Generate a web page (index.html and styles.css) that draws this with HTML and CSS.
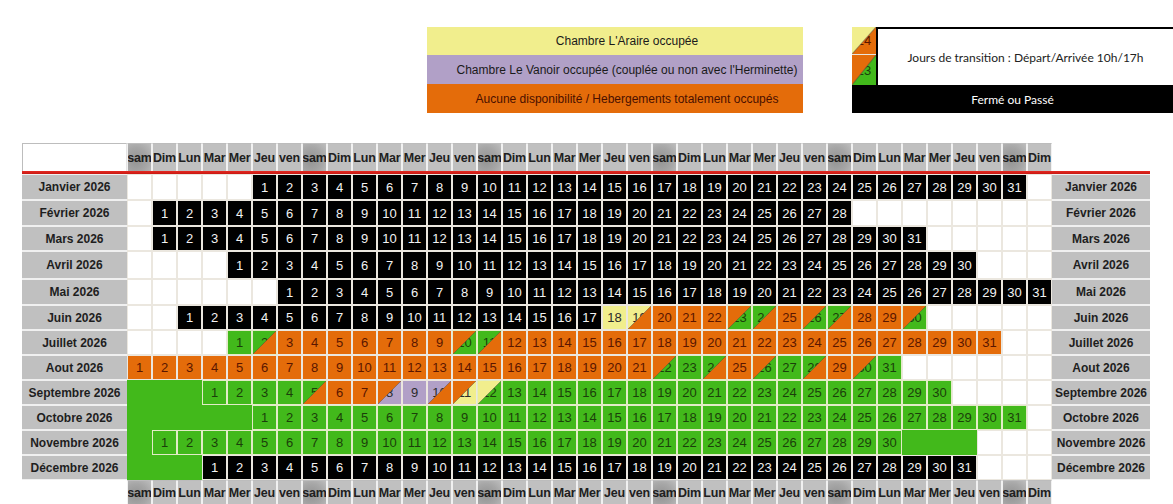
FILE: index.html
```html
<!DOCTYPE html>
<html lang="fr">
<head>
<meta charset="utf-8">
<title>Disponibilités 2026</title>
<link rel="stylesheet" href="styles.css">
</head>
<body>
<header class="legend">
  <div class="legend-main">
    <div class="lg lg-y">Chambre L'Araire occupée</div>
    <div class="lg lg-p">Chambre Le Vanoir occupée (couplée ou non avec l'Herminette)</div>
    <div class="lg lg-o">Aucune disponibilité / Hebergements totalement occupés</div>
  </div>
  <div class="legend-side">
    <div class="side-top">
      <div class="swatches">
        <div class="sw sw-top c-o"><span>24</span><svg class="tri" viewBox="0 0 24 24" preserveAspectRatio="none"><polygon points="0,0 24,0 0,24" fill="#f1ee8d"/><line x1="0" y1="24" x2="24" y2="0" stroke="#4a4a4a" stroke-opacity=".45" stroke-width="1"/></svg></div>
        <div class="sw sw-bot c-g"><span>23</span><svg class="tri" viewBox="0 0 24 24" preserveAspectRatio="none"><polygon points="0,0 24,0 0,24" fill="#e46c0a"/><line x1="0" y1="24" x2="24" y2="0" stroke="#4a4a4a" stroke-opacity=".45" stroke-width="1"/></svg></div>
      </div>
      <div class="trans-box">Jours de transition : Départ/Arrivée 10h/17h</div>
    </div>
    <div class="closed">Fermé ou Passé</div>
  </div>
</header>
<main id="cal" class="cal"></main>
<script src="script.js"></script>
</body>
</html>
```

FILE: styles.css
```css
html, body {
  margin: 0;
  padding: 0;
  overflow: hidden;
  background: #fff;
}
body {
  width: 1173px;
  height: 504px;
  font-family: "Liberation Sans", Arial, sans-serif;
}

/* ---------- legend ---------- */
.legend {
  display: flex;
  padding-top: 27px;
  padding-left: 427px;
  height: 86px;
}
.legend-main {
  width: 376px;
  display: flex;
  flex-direction: column;
}
.lg {
  display: flex;
  align-items: center;
  justify-content: center;
  padding-left: 24px;
  font-size: 12px;
  color: #1a1a1a;
  white-space: nowrap;
}
.lg-y { height: 28px; background: #f1ee8d; }
.lg-p { height: 29px; background: #b1a0c7; }
.lg-o { height: 29px; background: #e46c0a; color: #4a1000; }

.legend-side {
  margin-left: 49px;
  width: 321px;
  display: flex;
  flex-direction: column;
}
.side-top {
  display: flex;
  height: 58px;
}
.swatches {
  width: 24px;
  display: flex;
  flex-direction: column;
}
.sw {
  position: relative;
  display: flex;
  align-items: center;
  justify-content: center;
  font-size: 13px;
  box-sizing: border-box;
}
.sw-top { height: 28px; border-bottom: 1px solid #e9e6de; }
.sw-bot { height: 30px; }
.trans-box {
  flex: 1;
  border-top: 2px solid #000;
  border-left: 2px solid #000;
  display: flex;
  align-items: center;
  justify-content: center;
  font-family: Lato, "Open Sans", sans-serif;
  font-size: 12px;
  color: #222;
}
.closed {
  height: 28px;
  background: #000;
  color: #fff;
  display: flex;
  align-items: center;
  justify-content: center;
  font-family: Lato, "Open Sans", sans-serif;
  font-size: 12px;
}

/* ---------- calendar ---------- */
.cal {
  display: grid;
  margin: 30px 0 0 22px;
  grid-template-columns: 105px repeat(37, 25px) 98px;
  grid-template-rows: 28px 3px 26px 26px 25px 28px 26px repeat(7, 25px) 24px;
}
.corner {
  background: #fff;
  border-top: 1px solid #bdbdbd;
  border-left: 1px solid #bdbdbd;
  border-right: 1px solid #e4e4e4;
}
.blank { background: #fff; }
.hd {
  background: #c0c0c0;
  border-left: 1px solid #f1f1f1;
  border-right: 1px solid #f1f1f1;
  border-top: 1px solid #bcbcbc;
  box-sizing: border-box;
  display: flex;
  align-items: center;
  justify-content: center;
  font-size: 12.5px;
  font-weight: bold;
  color: #202020;
  letter-spacing: -0.2px;
  white-space: nowrap;
  overflow: hidden;
}
.hd-sam {
  background: radial-gradient(ellipse at 35% 60%, #939393 0%, #a6a6a6 55%, #bdbdbd 100%);
}
.redline {
  grid-column: 1 / -1;
  background: linear-gradient(#e42a22, #c81812);
}
.lbl {
  background: #c0c0c0;
  border-top: 1px solid #f0f0f0;
  border-bottom: 1px solid #f0f0f0;
  box-sizing: border-box;
  display: flex;
  align-items: center;
  justify-content: center;
  font-size: 12px;
  font-weight: bold;
  color: #1e1e1e;
  white-space: nowrap;
}
.d {
  position: relative;
  box-sizing: border-box;
  border: 1px solid #ebe7df;
  display: flex;
  align-items: center;
  justify-content: center;
  font-size: 13px;
  overflow: hidden;
}
.tri {
  position: absolute;
  left: 0;
  top: 0;
  width: 100%;
  height: 100%;
}
.c-w { background: #fff; }
.c-ge { background: #42b91b; border-color: #42b91b; }
.c-k { background: #000; color: #f2f2f2; }
.c-o { background: #e46c0a; color: #5a1600; }
.c-g { background: #42b91b; color: #1b3f0a; }
.d.c-g { border-color: #e2ecc6; }
.c-y { background: #f1ee8d; color: #2a2a2a; }
.c-p { background: #b1a0c7; color: #2a2a2a; }
```

FILE: script.js
```js
(function () {
  var cal = document.getElementById('cal');
  var heads = ['sam', 'Dim', 'Lun', 'Mar', 'Mer', 'Jeu', 'ven'];
  var fills = { o: '#e46c0a', g: '#42b91b', y: '#f1ee8d', p: '#b1a0c7' };

  function el(cls, txt) {
    var d = document.createElement('div');
    d.className = cls;
    if (txt != null) d.textContent = txt;
    return d;
  }
  function T(bg, ov, side) { return { bg: bg, ov: ov, side: side }; }

  function headRow(top) {
    cal.appendChild(el(top ? 'corner' : 'blank'));
    for (var i = 0; i < 37; i++) {
      var h = heads[i % 7];
      cal.appendChild(el('hd' + (h === 'sam' ? ' hd-sam' : ''), h));
    }
    cal.appendChild(el('blank'));
  }

  function range(map, a, b, v) { for (var i = a; i <= b; i++) map[i] = v; }

  var jun = {}; range(jun, 1, 17, 'k'); jun[18] = 'y';
  jun[19] = T('y', 'o', 'br'); jun[23] = T('g', 'o', 'tl'); jun[24] = T('g', 'o', 'br');
  jun[26] = T('g', 'o', 'tl'); jun[27] = T('g', 'o', 'br'); jun[30] = T('g', 'o', 'tl');

  var jul = {}; jul[1] = 'g'; jul[2] = T('g', 'o', 'br'); jul[10] = T('g', 'o', 'tl'); jul[11] = T('g', 'o', 'br');

  var aug = {}; aug[22] = T('g', 'o', 'tl'); aug[23] = 'g'; aug[24] = T('g', 'o', 'br');
  aug[26] = T('g', 'o', 'tl'); aug[27] = 'g'; aug[28] = T('g', 'o', 'br');
  aug[30] = T('g', 'o', 'tl'); aug[31] = 'g';

  var sep = {}; sep[5] = T('g', 'o', 'br'); sep[6] = 'o'; sep[7] = 'o';
  sep[8] = T('p', 'o', 'tl'); sep[9] = 'p'; sep[10] = T('p', 'o', 'br');
  sep[11] = T('y', 'o', 'tl'); sep[12] = T('g', 'y', 'tl');

  var months = [
    { n: 'Janvier 2026', s: 5, l: 31, def: 'k' },
    { n: 'Février 2026', s: 1, l: 28, def: 'k' },
    { n: 'Mars 2026', s: 1, l: 31, def: 'k' },
    { n: 'Avril 2026', s: 4, l: 30, def: 'k' },
    { n: 'Mai 2026', s: 6, l: 31, def: 'k' },
    { n: 'Juin 2026', s: 2, l: 30, def: 'o', m: jun },
    { n: 'Juillet 2026', s: 4, l: 31, def: 'o', m: jul },
    { n: 'Aout 2026', s: 0, l: 31, def: 'o', m: aug },
    { n: 'Septembre 2026', s: 3, l: 30, def: 'g', m: sep, pre: 'ge' },
    { n: 'Octobre 2026', s: 5, l: 31, def: 'g', pre: 'ge' },
    { n: 'Novembre 2026', s: 1, l: 30, def: 'g', pre: 'ge', postG: [31, 32, 33] },
    { n: 'Décembre 2026', s: 3, l: 31, def: 'k', pre: 'ge' }
  ];

  function tri(ov, side) {
    var ns = 'http://www.w3.org/2000/svg';
    var svg = document.createElementNS(ns, 'svg');
    svg.setAttribute('class', 'tri');
    svg.setAttribute('viewBox', '0 0 24 24');
    svg.setAttribute('preserveAspectRatio', 'none');
    var poly = document.createElementNS(ns, 'polygon');
    poly.setAttribute('points', side === 'tl' ? '0,0 24,0 0,24' : '24,0 24,24 0,24');
    poly.setAttribute('fill', fills[ov]);
    var line = document.createElementNS(ns, 'line');
    line.setAttribute('x1', '0'); line.setAttribute('y1', '24');
    line.setAttribute('x2', '24'); line.setAttribute('y2', '0');
    line.setAttribute('stroke', '#4a4a4a');
    line.setAttribute('stroke-opacity', '.45');
    line.setAttribute('stroke-width', '1');
    svg.appendChild(poly);
    svg.appendChild(line);
    return svg;
  }

  headRow(true);
  cal.appendChild(el('redline'));

  months.forEach(function (mo) {
    cal.appendChild(el('lbl', mo.n));
    for (var c = 0; c < 37; c++) {
      var day = c - mo.s + 1;
      if (day < 1 || day > mo.l) {
        var f = 'c-w';
        if (day < 1 && mo.pre) f = 'c-' + mo.pre;
        if (mo.postG && mo.postG.indexOf(c) >= 0) f = 'c-ge';
        cal.appendChild(el('d ' + f));
        continue;
      }
      var v = (mo.m && mo.m[day]) || mo.def;
      var cell;
      if (typeof v === 'string') {
        cell = el('d c-' + v);
        var sp = document.createElement('span');
        sp.textContent = day;
        cell.appendChild(sp);
      } else {
        cell = el('d c-' + v.bg);
        var s2 = document.createElement('span');
        s2.textContent = day;
        cell.appendChild(s2);
        cell.appendChild(tri(v.ov, v.side));
      }
      cal.appendChild(cell);
    }
    cal.appendChild(el('lbl', mo.n));
  });

  headRow(false);
})();
```
